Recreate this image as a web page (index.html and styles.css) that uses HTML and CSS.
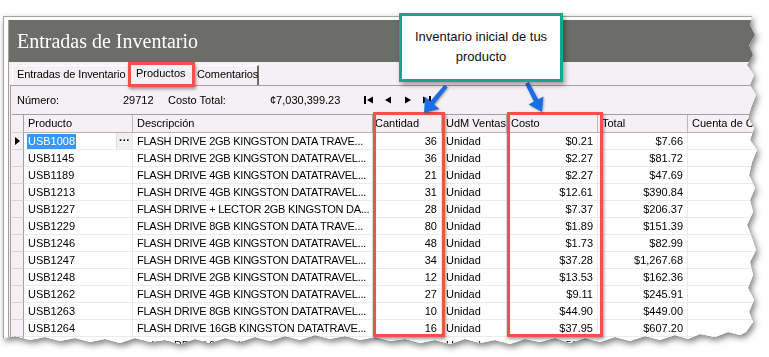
FILE: index.html
```html
<html>
<head>
<meta charset="UTF-8">
<link rel="stylesheet" href="styles.css">
</head>
<body>
<div class="page">
<div class="shadow">
<div class="sheet">
<div class="window">
<div class="frame">
<div class="title">Entradas de Inventario</div>
<div class="tabs">
<div class="tab tab-first">Entradas de Inventario</div>
<div class="tab tab-on">Productos</div>
<div class="tab tab-last">Comentarios</div>
</div>
<div class="panel">
<div class="toolbar">
<span class="t-num">Número:</span>
<span class="t-numval">29712</span>
<span class="t-cost">Costo Total:</span>
<span class="t-costval">¢7,030,399.23</span>
<svg class="nav" width="70" height="8" viewBox="0 0 70 8">
<rect x="0" y="0" width="2" height="8" fill="#000"/>
<polygon points="9,0.5 3,4 9,7.5" fill="#000"/>
<polygon points="27,0.5 21,4 27,7.5" fill="#000"/>
<polygon points="41,0.5 47,4 41,7.5" fill="#000"/>
<polygon points="59,0.5 65,4 59,7.5" fill="#000"/>
<rect x="65" y="0" width="2" height="8" fill="#000"/>
</svg>
</div>
<div class="grid">
<div class="row head">
<div class="c rh"></div>
<div class="c">Producto</div>
<div class="c">Descripción</div>
<div class="c c-qty">Cantidad</div>
<div class="c">UdM Ventas</div>
<div class="c">Costo</div>
<div class="c">Total</div>
<div class="c">Cuenta de Costo</div>
</div>
<div class="row">
<div class="c rh"><span class="cur"></span></div>
<div class="c prod"><span class="sel">USB1008</span><span class="dots">···</span></div>
<div class="c d">FLASH DRIVE 2GB KINGSTON DATA TRAVE...</div>
<div class="c n">36</div>
<div class="c">Unidad</div>
<div class="c n">$0.21</div>
<div class="c n">$7.66</div>
<div class="c"></div>
</div>
<div class="row">
<div class="c rh"></div>
<div class="c">USB1145</div>
<div class="c d">FLASH DRIVE 2GB KINGSTON DATATRAVEL...</div>
<div class="c n">36</div>
<div class="c">Unidad</div>
<div class="c n">$2.27</div>
<div class="c n">$81.72</div>
<div class="c"></div>
</div>
<div class="row">
<div class="c rh"></div>
<div class="c">USB1189</div>
<div class="c d">FLASH DRIVE 4GB KINGSTON DATATRAVEL...</div>
<div class="c n">21</div>
<div class="c">Unidad</div>
<div class="c n">$2.27</div>
<div class="c n">$47.69</div>
<div class="c"></div>
</div>
<div class="row">
<div class="c rh"></div>
<div class="c">USB1213</div>
<div class="c d">FLASH DRIVE 4GB KINGSTON DATATRAVEL...</div>
<div class="c n">31</div>
<div class="c">Unidad</div>
<div class="c n">$12.61</div>
<div class="c n">$390.84</div>
<div class="c"></div>
</div>
<div class="row">
<div class="c rh"></div>
<div class="c">USB1227</div>
<div class="c d">FLASH DRIVE + LECTOR 2GB KINGSTON DA...</div>
<div class="c n">28</div>
<div class="c">Unidad</div>
<div class="c n">$7.37</div>
<div class="c n">$206.37</div>
<div class="c"></div>
</div>
<div class="row">
<div class="c rh"></div>
<div class="c">USB1229</div>
<div class="c d">FLASH DRIVE 8GB KINGSTON DATA TRAVE...</div>
<div class="c n">80</div>
<div class="c">Unidad</div>
<div class="c n">$1.89</div>
<div class="c n">$151.39</div>
<div class="c"></div>
</div>
<div class="row">
<div class="c rh"></div>
<div class="c">USB1246</div>
<div class="c d">FLASH DRIVE 4GB KINGSTON DATATRAVEL...</div>
<div class="c n">48</div>
<div class="c">Unidad</div>
<div class="c n">$1.73</div>
<div class="c n">$82.99</div>
<div class="c"></div>
</div>
<div class="row">
<div class="c rh"></div>
<div class="c">USB1247</div>
<div class="c d">FLASH DRIVE 4GB KINGSTON DATATRAVEL...</div>
<div class="c n">34</div>
<div class="c">Unidad</div>
<div class="c n">$37.28</div>
<div class="c n">$1,267.68</div>
<div class="c"></div>
</div>
<div class="row">
<div class="c rh"></div>
<div class="c">USB1248</div>
<div class="c d">FLASH DRIVE 2GB KINGSTON DATATRAVEL...</div>
<div class="c n">12</div>
<div class="c">Unidad</div>
<div class="c n">$13.53</div>
<div class="c n">$162.36</div>
<div class="c"></div>
</div>
<div class="row">
<div class="c rh"></div>
<div class="c">USB1262</div>
<div class="c d">FLASH DRIVE 4GB KINGSTON DATATRAVEL...</div>
<div class="c n">27</div>
<div class="c">Unidad</div>
<div class="c n">$9.11</div>
<div class="c n">$245.91</div>
<div class="c"></div>
</div>
<div class="row">
<div class="c rh"></div>
<div class="c">USB1263</div>
<div class="c d">FLASH DRIVE 8GB KINGSTON DATATRAVEL...</div>
<div class="c n">10</div>
<div class="c">Unidad</div>
<div class="c n">$44.90</div>
<div class="c n">$449.00</div>
<div class="c"></div>
</div>
<div class="row">
<div class="c rh"></div>
<div class="c">USB1264</div>
<div class="c d">FLASH DRIVE 16GB KINGSTON DATATRAVE...</div>
<div class="c n">16</div>
<div class="c">Unidad</div>
<div class="c n">$37.95</div>
<div class="c n">$607.20</div>
<div class="c"></div>
</div>
<div class="row">
<div class="c rh"></div>
<div class="c">USB1267</div>
<div class="c d">FLASH DRIVE 8GB KINGSTON DATATRAVEL...</div>
<div class="c n">9</div>
<div class="c">Unidad</div>
<div class="c n">$52.10</div>
<div class="c n">$468.90</div>
<div class="c"></div>
</div>
</div>
</div>
</div>
</div>
</div>
</div>

<!-- marcas de la captura -->
<div class="mark mark-tab"></div>
<div class="mark mark-qty"></div>
<div class="mark mark-cost"></div>
<svg class="arrows" width="140" height="40" viewBox="0 0 140 40">
<polygon points="29.4,4.7 32.6,7.3 19.1,24.5 24.4,29 9,33 10,16.8 15.3,21.3" fill="#1c6fe3"/>
<polygon points="110.2,3.9 113.8,2.1 123.2,19.3 128.4,16.6 127,32 113.6,24.4 118.8,21.5" fill="#1c6fe3"/>
</svg>
<div class="callout">Inventario inicial de tus<br>producto</div>
</div>
</body>
</html>
```

FILE: styles.css
```css
*{
margin:0;
padding:0;
box-sizing:border-box;
}
body{
background:#fff;
font-family:"Liberation Sans", Arial, sans-serif;
font-size:11px;
color:#000;
width:769px;
height:357px;
overflow:hidden;
}
.page{
position:relative;
width:769px;
height:357px;
}
.shadow{
filter:drop-shadow(2px 3px 3px rgba(0,0,0,.5));
}
.sheet{
height:357px;
padding:16px 0 0 3px;
clip-path:polygon(0 0,752px 0,752px 16px,750px 25px,755px 35px,749px 45px,753px 55px,747px 65px,754px 75px,750px 85px,756px 95px,751px 108px,748px 118px,754px 128px,750px 140px,757px 150px,752px 162px,749px 175px,755px 188px,750px 200px,753px 212px,747px 225px,752px 238px,756px 250px,750px 262px,753px 275px,748px 288px,754px 300px,749px 312px,753px 322px,746px 332px,740px 335px,728px 332px,715px 337px,700px 334px,688px 339px,675px 335px,660px 340px,645px 336px,630px 341px,615px 337px,600px 342px,585px 338px,570px 343px,555px 338px,540px 342px,525px 339px,510px 344px,495px 340px,480px 343px,465px 339px,450px 344px,435px 340px,420px 343px,405px 339px,390px 341px,375px 337px,360px 340px,345px 336px,330px 339px,315px 335px,300px 340px,285px 336px,270px 341px,255px 337px,240px 342px,225px 338px,210px 343px,195px 339px,180px 344px,165px 340px,150px 342px,135px 338px,120px 343px,105px 339px,90px 342px,75px 338px,60px 341px,45px 337px,30px 340px,15px 336px,0 339px);
}
.window{
width:766px;
height:341px;
background:#fff;
border-top:1px solid #a3a3a3;
border-left:1px solid #a3a3a3;
padding:3px 0 0 4px;
}
.frame{
height:100%;
background:#f4f0f4;
border-left:1px solid #a0a0a0;
overflow:hidden;
}
.title{
height:42px;
background:#6c6d69;
color:#fff;
font-family:"Liberation Serif", "Times New Roman", serif;
font-size:20px;
line-height:42px;
padding-left:8px;
white-space:nowrap;
}
.tabs{
display:flex;
align-items:flex-end;
height:23px;
padding-left:3px;
}
.tab{
height:20px;
line-height:17px;
white-space:nowrap;
border-top:1px solid #fff;
border-left:1px solid #fff;
border-right:1px solid #8c8c8c;
}
.tab-first{width:117px;padding-left:4px;letter-spacing:-0.1px;}
.tab-on{
width:65px;
height:23px;
line-height:19px;
padding-left:6px;
margin-bottom:-1px;
background:#f4f0f4;
}
.tab-last{width:65px;padding-left:2px;border-right:2px solid #6a6a6a;letter-spacing:-0.1px;}
.panel{
margin-left:1px;
border-top:1px solid #a0a0a0;
border-left:1px solid #a0a0a0;
height:300px;
}
.toolbar{
display:flex;
align-items:center;
height:28px;
padding-left:6px;
white-space:nowrap;
}
.t-num{width:106px;}
.t-numval{width:45px;}
.t-cost{width:102px;}
.t-costval{width:94px;}
.nav{display:block;}
.grid{
margin-left:1px;
border-top:1px solid #a0a0a0;
background:#fff;
}
.row{
display:grid;
grid-template-columns:12px 109px 240px 69px 65px 91px 90px 130px;
height:17px;
}
.row.head{height:18px;background:#f4f0f4;}
.c{
border-right:1px solid #ebebeb;
border-bottom:1px solid #ebebeb;
padding-left:4px;
line-height:16px;
white-space:nowrap;
overflow:hidden;
}
.c.d{letter-spacing:-0.25px;}
.head .c{
border-right:1px solid #b9b9b9;
border-bottom:1px solid #b4b4b4;
line-height:17px;
}
.head .c-qty{padding-left:2px;}
.c.n{text-align:right;padding:0 4px 0 0;}
.c.rh{
background:#f4f0f4;
border-right:1px solid #a0a0a0;
border-bottom:1px solid #d6d6d6;
padding:0;
display:flex;
align-items:center;
padding-left:3px;
}
.cur{
border-left:5px solid #000;
border-top:4px solid transparent;
border-bottom:4px solid transparent;
}
.prod{
display:flex;
justify-content:space-between;
align-items:center;
padding-left:3px;
}
.sel{
background:#3399ff;
color:#fff;
line-height:15px;
padding:0 1px;
}
.dots{
width:16px;
height:16px;
line-height:14px;
text-align:center;
font-weight:bold;
background:#f0f0f0;
border-left:1px solid #e0e0e0;
}
.mark{
position:absolute;
border:3px solid #ef5347;
box-shadow:1px 2px 3px rgba(0,0,0,.4), inset 0 0 1px rgba(0,0,0,.2);
}
.mark-tab{left:128px;top:62px;width:67px;height:25px;}
.mark-qty{left:373px;top:112px;width:72px;height:225px;}
.mark-cost{left:507px;top:112px;width:96px;height:225px;}
.arrows{
position:absolute;
left:415px;
top:80px;
filter:drop-shadow(1px 1px 1px rgba(0,0,0,.3));
}
.callout{
position:absolute;
left:399px;
top:13px;
width:164px;
height:69px;
background:#fff;
border:3px solid #16a68e;
box-shadow:2px 3px 5px rgba(0,0,0,.35);
font-size:13px;
line-height:20px;
color:#111;
text-align:center;
padding-top:11px;
}
```
